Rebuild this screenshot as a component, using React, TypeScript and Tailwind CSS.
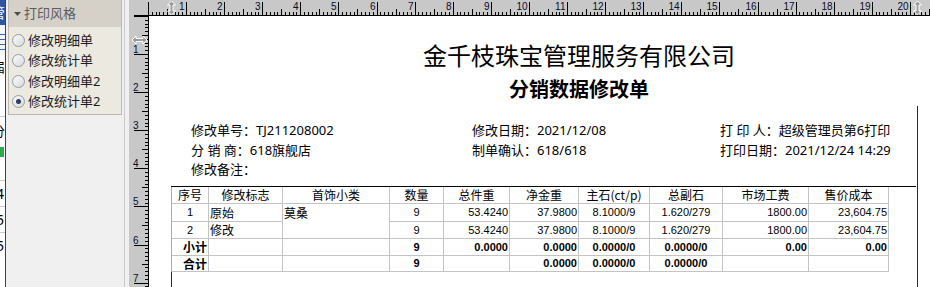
import React from "react";

const CM = 38.1;

function TopRuler() {
  const w = 801;
  const ox = 18.9;
  const ticks: React.ReactNode[] = [];
  const labels: React.ReactNode[] = [];
  for (let i = 0; ; i++) {
    const x = Math.round(ox + (i * CM) / 10) + 0.5;
    if (x > w) break;
    const h = i % 10 === 0 ? 14 : i % 5 === 0 ? 7 : 4;
    ticks.push(<line key={i} x1={x} x2={x} y1={16 - h} y2={16} stroke="#000" strokeWidth={1} />);
    if (i % 10 === 0 && i > 0) {
      labels.push(
        <text key={"l" + i} x={x - 2} y={10} textAnchor="end" fontSize={10} fill="#0a0a28" fontFamily="Liberation Sans, sans-serif">
          {i / 10}
        </text>
      );
    }
  }
  const arrow = (cx: number) => (
    <polygon
      points={`${cx},1 ${cx + 4},5 ${cx + 1.5},5 ${cx + 1.5},11 ${cx + 4},11 ${cx},15 ${cx - 4},11 ${cx - 1.5},11 ${cx - 1.5},5 ${cx - 4},5`}
      fill="#9c9c9c"
      stroke="#ffffff"
      strokeWidth={1}
    />
  );
  return (
    <svg width={w} height={16} className="block">
      {ticks}
      <line x1={5} x2={w} y1={15.5} y2={15.5} stroke="#000" />
      {labels}
      {arrow(42.5)}
      {arrow(788.5)}
    </svg>
  );
}

function SideRuler() {
  const h = 271;
  const ticks: React.ReactNode[] = [];
  const labels: React.ReactNode[] = [];
  for (let i = 0; ; i++) {
    const y = Math.round(-0.1 + (i * CM) / 10) + 0.5;
    if (y > h) break;
    const len = i % 10 === 0 ? 15 : i % 5 === 0 ? 7 : 4;
    ticks.push(<line key={i} x1={20 - len} x2={20} y1={y} y2={y} stroke="#000" strokeWidth={1} />);
    if (i % 10 === 0 && i > 0) {
      labels.push(
        <text key={"l" + i} x={4} y={y - 2} fontSize={10} fill="#0a0a28" fontFamily="Liberation Sans, sans-serif">
          {i / 10}
        </text>
      );
    }
  }
  return (
    <svg width={20} height={h} className="block">
      {ticks}
      <line x1={19.5} x2={19.5} y1={0} y2={h} stroke="#000" />
      {labels}
      <polygon
        points="3,24 7,20 7,22.5 14,22.5 14,20 18,24 14,28 14,25.5 7,25.5 7,28"
        fill="#9c9c9c"
        stroke="#ffffff"
        strokeWidth={1}
      />
    </svg>
  );
}

function LeftStrip() {
  return (
    <div className="w-[6px] shrink-0 overflow-hidden border-r border-[#23418f] bg-white flex flex-col">
      <div className="h-[25px] shrink-0 bg-[#2d57a3] text-white text-[14px] leading-[25px] -ml-[9px] whitespace-nowrap">管</div>
      <div className="h-[30px] shrink-0 bg-[#f4f6fa] flex flex-col justify-center gap-[4px] pt-[4px]">
        <div className="h-[6px] w-[5px] border-y border-[#3b67b5]" />
        <div className="h-[6px] w-[5px] border-y border-[#3b67b5]" />
      </div>
      <div className="h-[24px] shrink-0 text-[13px] leading-[24px] -ml-[8px] whitespace-nowrap text-black">届</div>
      <div className="h-[38px] shrink-0 border-b border-[#c8c8c8]" />
      <div className="h-[28px] shrink-0 text-[13px] leading-[28px] -ml-[8px] whitespace-nowrap text-black">分</div>
      <div className="h-[14px] shrink-0 flex items-center">
        <div className="h-[10px] w-[4px] bg-[#2fa84f]" />
      </div>
      <div className="h-[22px] shrink-0 border-b border-[#c8c8c8]" />
      <div className="h-[26px] shrink-0 border-b border-[#c8c8c8] text-[14px] leading-[26px] -ml-[4px] text-black">4</div>
      <div className="h-[26px] shrink-0 border-b border-[#c8c8c8] text-[14px] leading-[26px] -ml-[4px] text-black">5</div>
      <div className="h-[26px] shrink-0 text-[14px] leading-[26px] -ml-[4px] text-black">5</div>
    </div>
  );
}

function Radio({ checked, label }: { checked?: boolean; label: string }) {
  return (
    <div className="h-[20.5px] flex items-center">
      <div className="ml-[3px] w-[13px] h-[13px] rounded-full border border-[#939ca6] bg-gradient-to-br from-[#fbfbfb] to-[#d9dadc] flex items-center justify-center">
        {checked && <div className="w-[5px] h-[5px] rounded-full bg-[#2b3f63]" />}
      </div>
      <span className="ml-[3px] text-[13px] leading-none text-[#1c1c1c]">{label}</span>
    </div>
  );
}

function Panel() {
  return (
    <div className="w-[119px] shrink-0 border-r border-[#c9c9c9] bg-[#f0f0f0] pl-[2px]">
      <div className="w-[114px] border-x border-b border-[#bdb9b0]">
        <div className="h-[27px] bg-[#d5d1c9] flex items-center">
          <svg width="7" height="4" className="ml-[5px]">
            <polygon points="0,0 7,0 3.5,4" fill="#4f4f4f" />
          </svg>
          <span className="ml-[3px] text-[13px] leading-none text-[#5c5c5c]">打印风格</span>
        </div>
        <div className="h-[87px] bg-[#ece9e1] pt-[3px]">
          <Radio label="修改明细单" />
          <Radio label="修改统计单" />
          <Radio label="修改明细单2" />
          <Radio label="修改统计单2" checked />
        </div>
      </div>
    </div>
  );
}

type Cell = {
  t: string;
  a: "c" | "l" | "r";
  cjk?: boolean;
};

const header = ["序号", "修改标志", "首饰小类", "数量", "总件重", "净金重", "主石(ct/p)", "总副石", "市场工费", "售价成本"];

const row1: Cell[] = [
  { t: "1", a: "c" },
  { t: "原始", a: "l", cjk: true },
  { t: "莫桑", a: "l", cjk: true },
  { t: "9", a: "c" },
  { t: "53.4240", a: "r" },
  { t: "37.9800", a: "r" },
  { t: "8.1000/9", a: "c" },
  { t: "1.620/279", a: "c" },
  { t: "1800.00", a: "r" },
  { t: "23,604.75", a: "r" },
];
const row2: Cell[] = [
  { t: "2", a: "c" },
  { t: "修改", a: "l", cjk: true },
  { t: "9", a: "c" },
  { t: "53.4240", a: "r" },
  { t: "37.9800", a: "r" },
  { t: "8.1000/9", a: "c" },
  { t: "1.620/279", a: "c" },
  { t: "1800.00", a: "r" },
  { t: "23,604.75", a: "r" },
];
const row3: Cell[] = [
  { t: "小计", a: "r", cjk: true },
  { t: "", a: "l" },
  { t: "", a: "l" },
  { t: "9", a: "c" },
  { t: "0.0000", a: "r" },
  { t: "0.0000", a: "r" },
  { t: "0.0000/0", a: "c" },
  { t: "0.0000/0", a: "c" },
  { t: "0.00", a: "r" },
  { t: "0.00", a: "r" },
];
const row4: Cell[] = [
  { t: "合计", a: "r", cjk: true },
  { t: "", a: "l" },
  { t: "", a: "l" },
  { t: "9", a: "c" },
  { t: "", a: "r" },
  { t: "0.0000", a: "r" },
  { t: "0.0000/0", a: "c" },
  { t: "0.0000/0", a: "c" },
  { t: "", a: "r" },
  { t: "", a: "r" },
];

const alignCls = { c: "justify-center", l: "justify-start", r: "justify-end" };

function TCell({ c, first, bold, extra }: { c: Cell; first?: boolean; bold?: boolean; extra?: string }) {
  return (
    <div
      className={[
        "border-r border-b border-[#c3c3c3] flex items-center px-[1px] overflow-hidden whitespace-nowrap text-black",
        alignCls[c.a],
        first ? "border-l border-l-[#a8a8a8]" : "",
        c.cjk ? "text-[12px] font-['Noto_Sans_CJK_SC',sans-serif]" : "text-[11px] font-['Liberation_Sans','Noto_Sans_CJK_SC',sans-serif]",
        bold ? "font-bold" : "",
        extra ?? "",
      ].join(" ")}
    >
      {c.t}
    </div>
  );
}

function DataTable() {
  return (
    <div className="w-[745px] border-t border-black">
      <div className="grid w-[718px] grid-cols-[38px_74px_107px_54px_66px_69px_71px_73px_86px_80px] grid-rows-[17px_18px_17px_17px_16px]">
        {header.map((h, i) => (
          <div
            key={h}
            className={[
              "border-r border-b border-[#c3c3c3] flex items-center justify-center text-[12px] whitespace-nowrap text-black font-['Noto_Sans_CJK_SC',sans-serif]",
              i === 0 ? "border-l border-l-[#a8a8a8]" : "",
            ].join(" ")}
          >
            {h}
          </div>
        ))}
        {row1.map((c, i) =>
          i === 2 ? (
            <div key={"r1" + i} className="row-span-2 border-r border-b border-[#c3c3c3] px-[1px]">
              <div className="h-[17px] flex items-center text-[12px] text-black font-['Noto_Sans_CJK_SC',sans-serif]">{c.t}</div>
            </div>
          ) : (
            <TCell key={"r1" + i} c={c} first={i === 0} />
          )
        )}
        {row2.map((c, i) => (
          <TCell key={"r2" + i} c={c} first={i === 0} />
        ))}
        {row3.map((c, i) => (
          <TCell key={"r3" + i} c={c} first={i === 0} bold />
        ))}
        {row4.map((c, i) => (
          <TCell key={"r4" + i} c={c} first={i === 0} bold />
        ))}
      </div>
    </div>
  );
}

function Page() {
  return (
    <div className="relative flex-1 bg-white overflow-hidden font-['Noto_Sans','Noto_Sans_CJK_SC',sans-serif] text-black">
      <div className="pl-[22px] pt-[24px]">
        <div className="w-[816px] text-center">
          <div className="text-[24px] leading-[30px] font-['Noto_Sans_CJK_SC',sans-serif]">金千枝珠宝管理服务有限公司</div>
          <div className="mt-[6px] text-[20px] leading-[26px] font-bold font-['Noto_Sans_CJK_SC',sans-serif]">分销数据修改单</div>
        </div>
        <div className="mt-[19px] h-[59px] pl-[20px] grid grid-cols-[281px_248px_220px] text-[13px] leading-[19.5px] whitespace-nowrap">
          <div>修改单号：TJ211208002</div>
          <div>修改日期：2021/12/08</div>
          <div>打 印 人：超级管理员第6打印</div>
          <div>分 销 商：618旗舰店</div>
          <div>制单确认：618/618</div>
          <div>打印日期：2021/12/24 14:29</div>
          <div>修改备注：</div>
        </div>
        <div className="mt-[6px]">
          <DataTable />
        </div>
      </div>
      <div className="absolute left-[768px] top-[90px] bottom-0 w-px bg-[#1414d2]" />
      <div className="absolute left-[22px] top-[256px] bottom-0 w-px bg-[#1414d2]" />
    </div>
  );
}

export default function App() {
  return (
    <div className="flex w-[930px] h-[287px] overflow-hidden bg-[#f0f0f0] font-['Noto_Sans','Noto_Sans_CJK_SC',sans-serif]">
      <LeftStrip />
      <Panel />
      <div className="w-[4px] shrink-0 bg-[#f0f0f0]" />
      <div className="flex-1 flex flex-col bg-[#c8c8c8]">
        <TopRuler />
        <div className="flex flex-1 min-h-0">
          <div className="w-[20px] shrink-0">
            <SideRuler />
          </div>
          <Page />
        </div>
      </div>
    </div>
  );
}
